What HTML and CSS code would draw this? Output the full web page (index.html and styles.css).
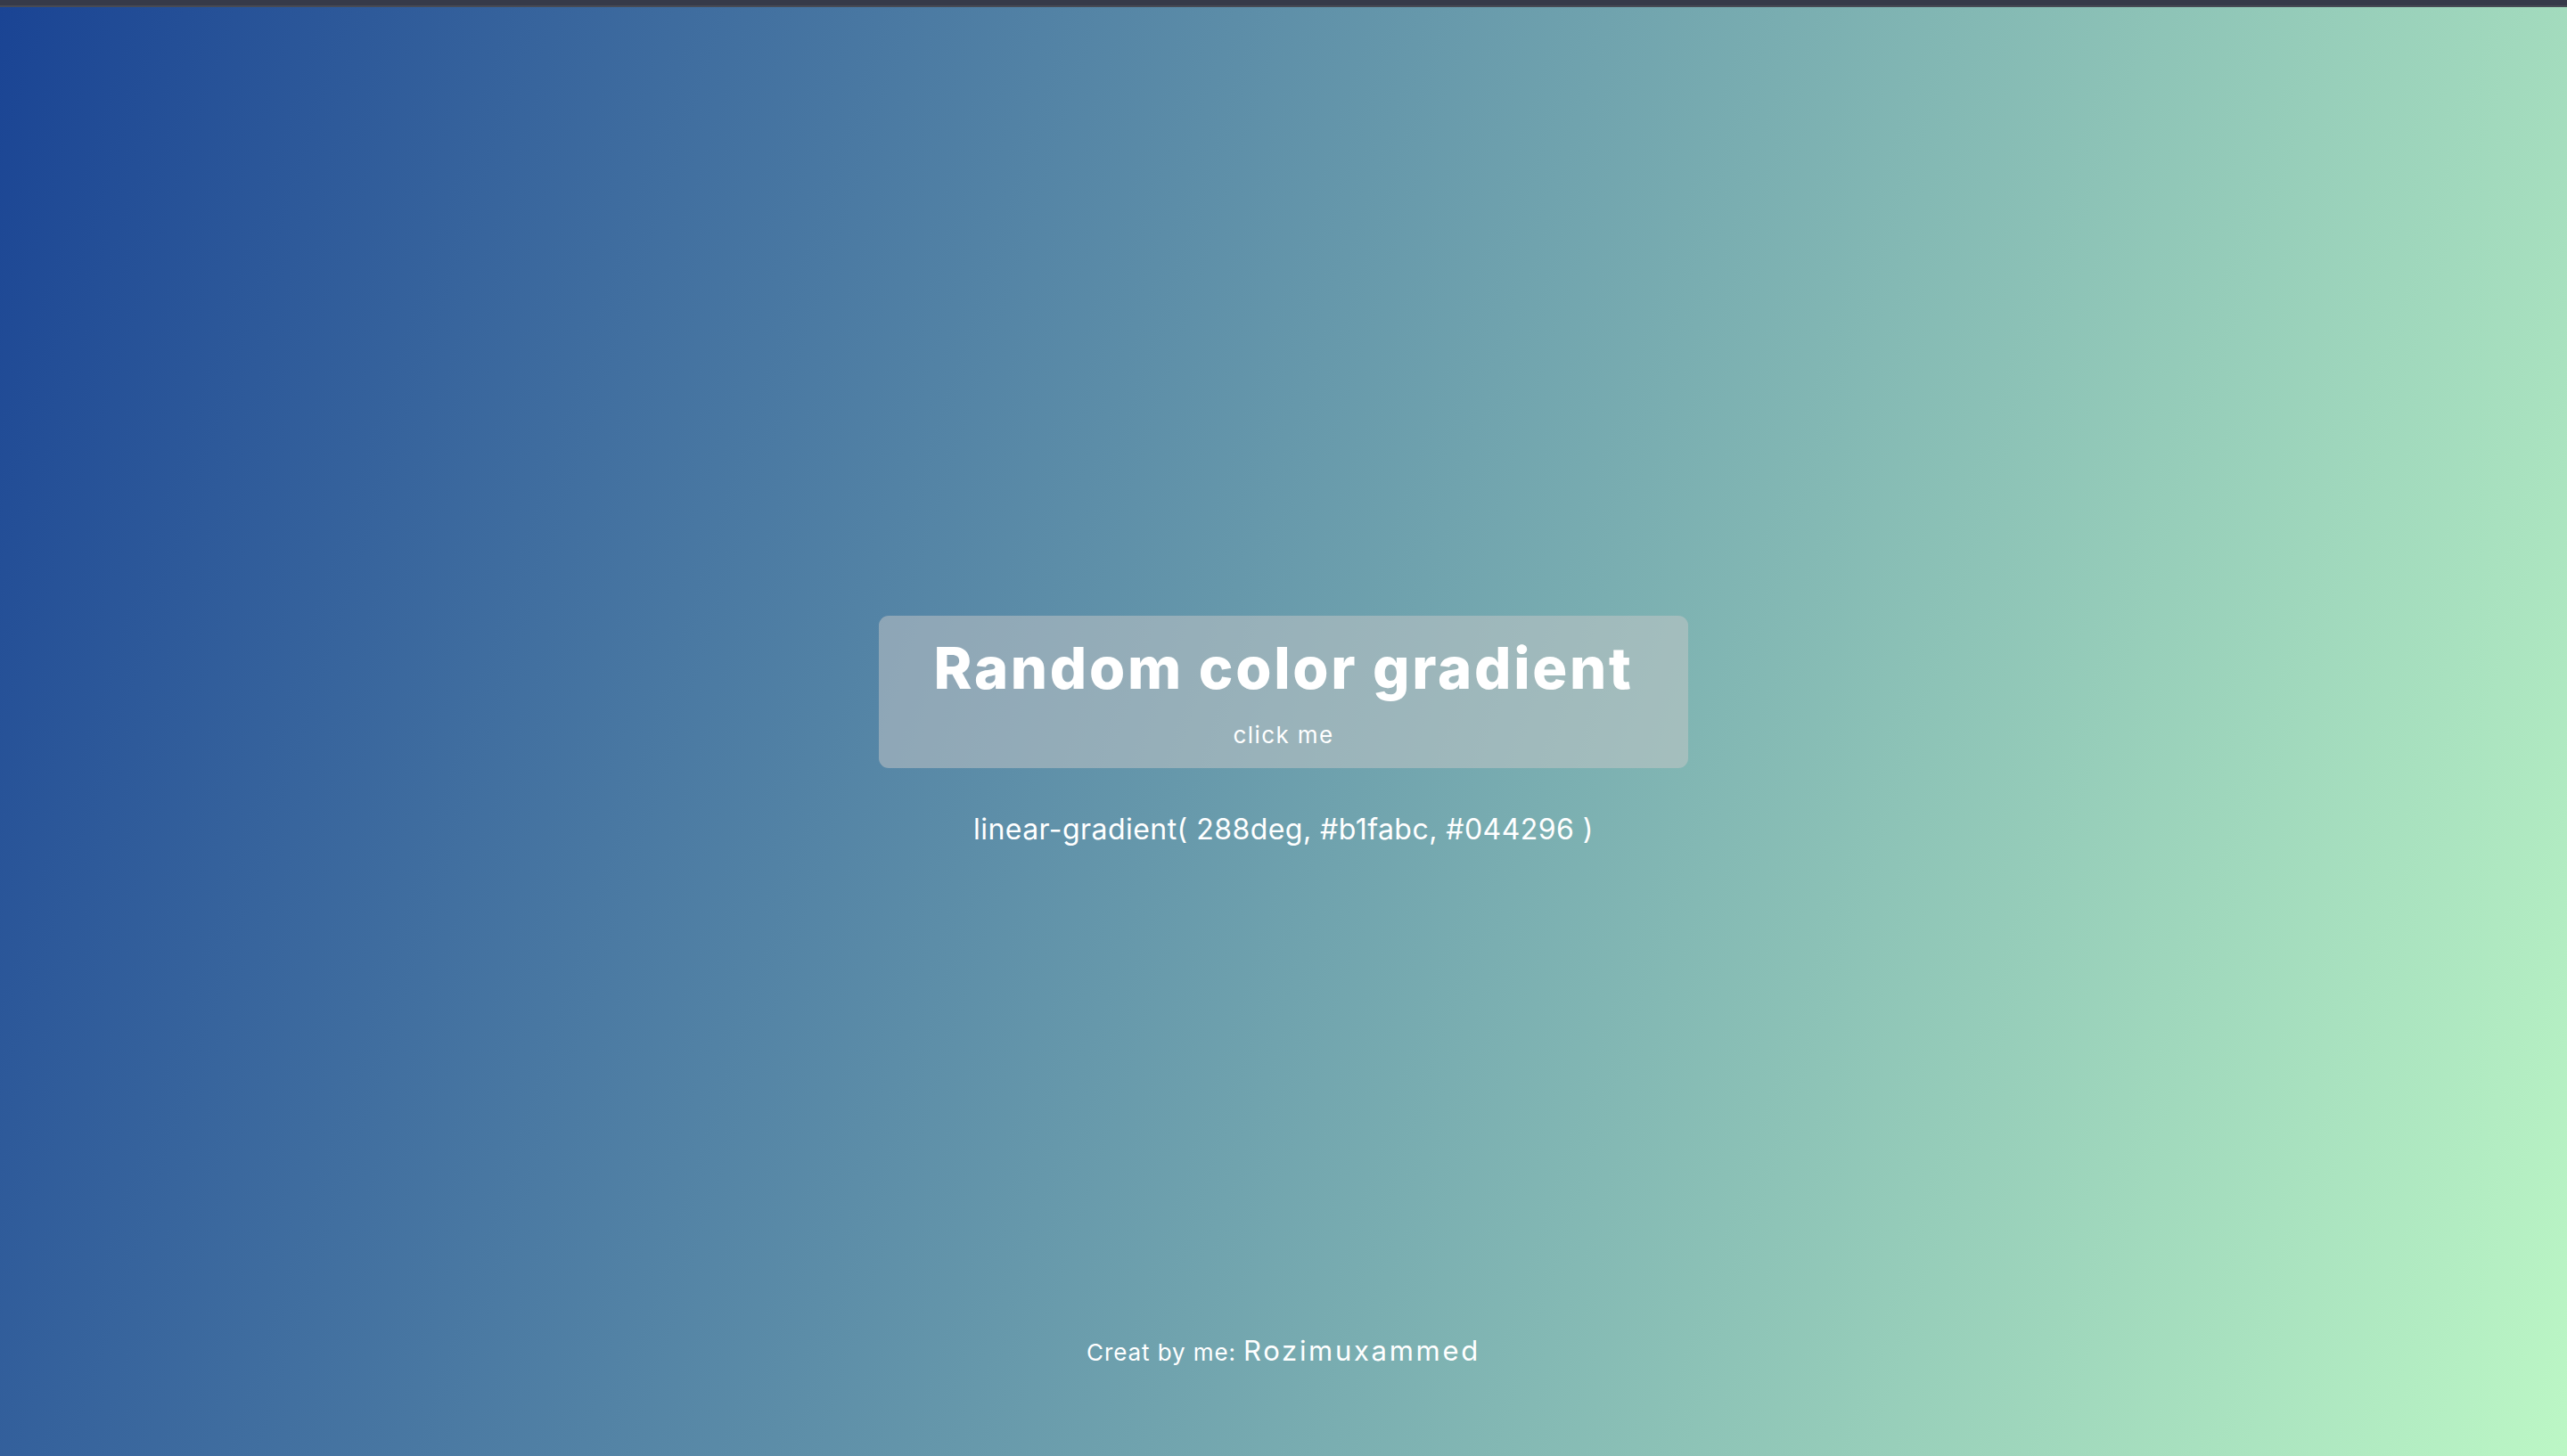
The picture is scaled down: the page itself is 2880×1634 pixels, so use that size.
FILE: index.html
```html
<!DOCTYPE html>
<html lang="en">
<head>
<meta charset="UTF-8">
<title>Random color gradient</title>
<link rel="stylesheet" href="styles.css">
</head>
<body>
<div class="page">
  <div class="topbar"></div>
  <main class="stage">
    <section class="center">
      <button class="card" type="button">
        <h1 class="title">Random color gradient</h1>
        <span class="hint">click me</span>
      </button>
      <p class="code">linear-gradient( 288deg, #b1fabc, #044296 )</p>
    </section>
    <footer class="footer">Creat by me: <span class="author">Rozimuxammed</span></footer>
  </main>
</div>
</body>
</html>
```

FILE: styles.css
```css
html, body {
  margin: 0;
  padding: 0;
  height: 100%;
}

body {
  font-family: "Inter", "Liberation Sans", sans-serif;
  color: #ffffff;
}

.page {
  display: flex;
  flex-direction: column;
  height: 100vh;
}

.topbar {
  height: 6px;
  background: #363a49;
  border-bottom: 2px solid #474a54;
  flex: none;
}

.stage {
  flex: 1;
  display: grid;
  grid-template-rows: 1fr auto 1fr;
  justify-items: center;
  background: linear-gradient(288deg, #bcf7c5, #1a4494);
}

.center {
  grid-row: 2;
  display: flex;
  flex-direction: column;
  align-items: center;
}

.card {
  display: flex;
  flex-direction: column;
  align-items: center;
  gap: 20px;
  padding: 20px 61px 22px;
  border: none;
  border-radius: 11px;
  background: rgba(200, 200, 200, 0.5);
  color: #ffffff;
  font-family: inherit;
  cursor: pointer;
}

.title {
  margin: 0;
  font-size: 65px;
  font-weight: 800;
  line-height: 1.2;
  letter-spacing: 2.7px;
}

.hint {
  font-size: 26px;
  font-weight: 400;
  line-height: 1.21;
  letter-spacing: 1.4px;
}

.code {
  margin: 50px 0 0;
  font-size: 32px;
  font-weight: 400;
  line-height: 1.21;
  letter-spacing: 0.45px;
}

.footer {
  grid-row: 3;
  align-self: end;
  padding-bottom: 100px;
  font-size: 26px;
  line-height: 1.21;
  letter-spacing: 0.9px;
}

.author {
  font-size: 31px;
  letter-spacing: 2.7px;
}
```
